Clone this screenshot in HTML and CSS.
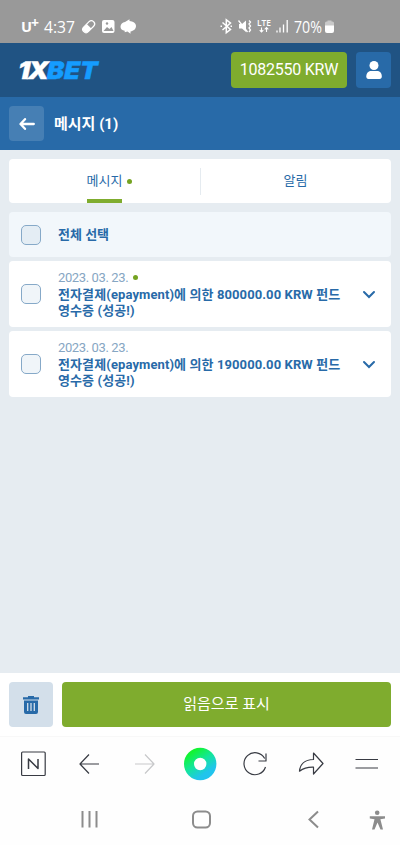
FILE: index.html
```html
<!DOCTYPE html>
<html lang="ko">
<head>
<meta charset="utf-8">
<meta name="viewport" content="width=device-width">
<title>메시지</title>
<link rel="stylesheet" href="styles.css">
</head>
<body>
<div class="status">
  <svg width="400" height="43" viewBox="0 0 400 43" fill="none" stroke="#fff">
    <g class="status-text">
      <text x="21" y="32" font-size="15" font-weight="700" textLength="11" lengthAdjust="spacingAndGlyphs">U</text>
      <text x="31" y="28" font-size="14" font-weight="700" textLength="8" lengthAdjust="spacingAndGlyphs">+</text>
      <text x="44" y="32.500" font-size="16" textLength="31" lengthAdjust="spacingAndGlyphs">4:37</text>
      <text x="257" y="26" font-size="8.500" font-weight="600" textLength="14" lengthAdjust="spacingAndGlyphs">LTE</text>
      <text x="294" y="32.500" font-size="16" textLength="28" lengthAdjust="spacingAndGlyphs">70%</text>
    </g>
    <g transform="rotate(-45 88.500 26.500)"><rect x="81.500" y="23.500" width="14" height="6.500" rx="3.200" stroke-width="1.200"/><path d="M89 23.500h-4a3.200 3.200 0 0 0 0 6.500h4z" fill="#fff" stroke="none"/></g>
    <rect x="102" y="20" width="12.500" height="13" rx="2" fill="#fff" stroke="none"/>
    <path d="M103.500 31l3.500-4 2.500 2 2-2 2 4z" fill="#999" stroke="none"/><circle cx="107" cy="23.500" r="1.200" fill="#999" stroke="none"/>
    <path d="M129.500 19.300v1.700c3.500.2 6.500 2.300 6.500 5 0 3-2.500 5-5.500 5.500v2.300l-3-2.300-2.800.8v-1.500c-2.600-.3-4.200-1.800-4.200-4 0-2.800 2-4.600 4.500-4.800z" fill="#fff" stroke="none"/>
    <path d="M222.500 22.500l8 7-4.200 3.200V19.800l4.200 3.200-8 7M220.500 26.200h1.500M230.500 26.200h1.500" stroke-width="1.500"/>
    <path d="M239 24h3l4-3.500V32l-4-3.500h-3z" fill="#fff" stroke="none"/><path d="M238.500 20.500l9 11.500M249 20.500l1.500 1.500-1.500 2 1.500 2-1.500 2 1.500 2-1.500 2" stroke-width="1.300"/>
    <path d="M261.500 27.500v4.500m-1.800-1.800l1.800 1.800 1.800-1.800M266.500 32v-4.500m-1.800 1.800l1.800-1.800 1.800 1.800" stroke-width="1.100"/>
    <path d="M277 32.500v-2M280 32.500v-5M283.500 32.500v-8M287.200 32.500V20" stroke-width="1.300"/>
    <path d="M325 23q0-1.500 1.500-1.500h1v-1h4v1h1q1.500 0 1.500 1.500v3h-9z" fill="#c9c9c9" stroke="none"/><path d="M325 25.500h9V31q0 2-2 2h-5q-2 0-2-2z" fill="#fff" stroke="none"/>
  </svg>
</div>
<header class="header">
  <svg class="logo" width="84" height="20" viewBox="0 0 84 20">
    <g transform="translate(3.500 0) skewX(-12)">
      <text class="logo-text" x="0" y="18.700" textLength="12" lengthAdjust="spacingAndGlyphs">1</text>
      <text class="logo-text" x="10" y="18.700" textLength="21" lengthAdjust="spacingAndGlyphs">X</text>
      <text class="logo-text bet" x="29" y="18.700" textLength="50.500" lengthAdjust="spacingAndGlyphs">BET</text>
    </g>
  </svg>
  <div class="balance">1082550 KRW</div>
  <div class="user"><svg width="16" height="18" viewBox="0 0 16 18" fill="#fff"><circle cx="8" cy="4.500" r="4.500"/><path d="M.3 15.500C.3 11.500 3 10 5 10h6c2.500 0 4.800 1.500 4.800 5.500 0 1.500-.8 2.500-2.300 2.500H2.500C1 18 .3 17 .3 15.500z"/></svg></div>
</header>
<div class="titlebar">
  <div class="back"><svg width="16" height="12" viewBox="0 0 16 12" fill="none" stroke="#fff" stroke-width="2.300" stroke-linecap="round" stroke-linejoin="round"><path d="M6 1.200L1.500 6 6 10.800M1.800 6H14.800"/></svg></div>
  <h1>메시지 (1)</h1>
</div>
<main>
  <div class="tabs">
    <div class="tab active"><span class="label">메시지</span><i class="dot"></i></div>
    <div class="tab"><span class="label">알림</span></div>
  </div>
  <div class="card all"><span class="check"></span><b>전체 선택</b></div>
  <div class="card">
    <span class="check"></span>
    <div class="message"><time>2023. 03. 23.<i class="dot"></i></time><b>전자결제(epayment)에 의한 800000.00 KRW 펀드<br>영수증 (성공!)</b></div>
    <svg class="chevron" width="14" height="9" viewBox="0 0 14 9"><path d="M2 2l5 5 5-5"/></svg>
  </div>
  <div class="card">
    <span class="check"></span>
    <div class="message"><time>2023. 03. 23.</time><b>전자결제(epayment)에 의한 190000.00 KRW 펀드<br>영수증 (성공!)</b></div>
    <svg class="chevron" width="14" height="9" viewBox="0 0 14 9"><path d="M2 2l5 5 5-5"/></svg>
  </div>
</main>
<div class="actions">
  <div class="trash"><svg width="16" height="18" viewBox="0 0 16 18"><path d="M5 0h6v1.200h5V3.500H0V1.200h5zM1 4.500h14V16q0 2-2 2H3q-2 0-2-2z" fill="#286aa8"/><path d="M4.700 7v8M8 7v8M11.300 7v8" stroke="#d3dfea" stroke-width="1.300"/></svg></div>
  <div class="mark">읽음으로 표시</div>
</div>
<nav class="browser">
  <svg width="400" height="53" viewBox="0 0 400 53" fill="none" stroke="#383b43" stroke-width="1.200" stroke-linejoin="round">
    <defs><linearGradient id="ring" gradientUnits="userSpaceOnUse" x1="190" y1="12" x2="210" y2="42"><stop offset=".1" stop-color="#13f431"/><stop offset=".45" stop-color="#13e69b"/><stop offset=".8" stop-color="#21c4ed"/></linearGradient></defs>
    <rect x="21.600" y="15" width="23.600" height="23.500" rx="1"/><path d="M28.500 32V22l9.500 9.500V22" stroke-width="1.500"/>
    <path d="M99 27H80M89 17.500L80 27l9 9.500"/>
    <path d="M135 27h19M145 17.500l9 9.500-9 9.500" stroke="#c7c8ca"/>
    <circle cx="200.200" cy="27" r="11.200" stroke="url(#ring)" stroke-width="10"/>
    <path d="M265.500 30a11 11 0 1 1-.8-8.500M266 16.500v7.500h-7.500"/>
    <path d="M313.500 16l9.500 10.500-9.500 10.500v-6.800c-6.500-.2-10 1-14 4 .5-6.500 5-11.500 14-11.700z"/>
    <path d="M355.500 22.500H378M355.500 31H378"/>
  </svg>
</nav>
<nav class="system">
  <svg width="400" height="55" viewBox="0 0 400 55" fill="none" stroke="#8c8c8c" stroke-width="2">
    <path d="M82.500 21v16.500M89.500 21v16.500M96.500 21v16.500"/>
    <rect x="193" y="21.500" width="17" height="16" rx="4.500"/>
    <path d="M318 21.500l-8.500 8 8.500 8"/>
    <circle cx="377.200" cy="22.800" r="2.300" fill="#8c8c8c" stroke="none"/>
    <path d="M369.800 26.200h15.200v2.200l-4.600.8 2.600 10.300h-2.500l-3-7-3 7H372l2.500-10.300-4.700-.8z" fill="#8c8c8c" stroke="none"/>
  </svg>
</nav>
</body>
</html>
```
FILE: styles.css
```css
* { box-sizing: border-box; }
body { margin: 0; width: 400px; height: 845px; overflow: hidden; display: flex; flex-direction: column; background: #e6ecf1; font-family: Roboto, "Noto Sans CJK KR", sans-serif; color: #286aa8; }
svg { display: block; flex: none; }
.status { height: 43px; background: #999; flex: none; }
.status-text { fill: #fff; stroke: none; font-family: "Open Sans", sans-serif; }
.header { height: 54px; flex: none; background: #205383; display: flex; align-items: center; padding: 0 9px 0 17px; }
.logo { overflow: visible; }
.logo-text { fill: #fff; stroke: #fff; stroke-width: .4px; font: 900 24px Inter, sans-serif; }
.logo-text.bet { fill: #159cff; stroke: #159cff; }
.balance { margin-left: auto; width: 116px; height: 36px; border-radius: 4px; background: #7fac2e; color: #fff; font-size: 16px; letter-spacing: -.25px; line-height: 36px; text-align: center; white-space: nowrap; }
.user { width: 35px; height: 36px; margin-left: 9px; border-radius: 4px; background: #286aa8; display: flex; align-items: center; justify-content: center; }
.titlebar { height: 53px; flex: none; background: #286aa8; display: flex; align-items: center; padding-left: 9px; color: #fff; }
.back { width: 35px; height: 35px; border-radius: 4px; background: #467fb4; display: flex; align-items: center; justify-content: center; }
h1 { margin: 0 0 0 10px; font-size: 15px; line-height: 22px; font-weight: 700; }
main { flex: none; height: 523px; padding: 9px 9px 0; display: flex; flex-direction: column; }
.tabs { height: 44px; border-radius: 4px; background: #fff; display: flex; margin-bottom: 9px; }
.tab { flex: 1; height: 44px; display: flex; justify-content: center; align-items: center; font-size: 13px; position: relative; }
.tab + .tab::before { content: ""; width: 1px; height: 27px; background: #e5ebf0; position: absolute; left: 0; top: 9px; }
.label { line-height: 44px; height: 44px; }
.tab.active .label { background: linear-gradient(#7fac2e, #7fac2e) bottom / 100% 4px no-repeat; }
.dot { display: inline-block; width: 5px; height: 5px; border-radius: 50%; background: #75a321; margin-left: 5px; }
.tab .dot { margin-right: -10px; }
.card { height: 66px; flex: none; border-radius: 4px; background: #fff; display: flex; align-items: center; padding: 0 15px 0 12px; margin-bottom: 4px; font-size: 13px; }
.card.all { height: 45px; background: #f2f7fb; }
.check { width: 20px; height: 20px; flex: none; border: 1px solid #86a9c8; border-radius: 5px; background: #f0f5f9; margin-right: 17px; }
.all .check { background: #e4edf4; }
.card b { display: block; line-height: 16px; white-space: nowrap; }
.message b { letter-spacing: .1px; }
time { display: flex; align-items: center; line-height: 17px; height: 17px; margin-bottom: 1px; color: #86a6c3; white-space: nowrap; letter-spacing: -.38px; }
.chevron { margin-left: auto; fill: none; stroke: #286aa8; stroke-width: 2; stroke-linecap: round; }
.actions { height: 64px; flex: none; padding: 9px 9px 0; background: #fff; display: flex; gap: 9px; border-bottom: 1px solid #f8f8f8; }
.trash { width: 44px; height: 45px; border-radius: 4px; background: #d3dfea; display: flex; align-items: center; justify-content: center; }
.mark { flex: 1; height: 45px; border-radius: 4px; background: #7fac2e; color: #fff; text-align: center; font-size: 15px; line-height: 45px; }
.browser { height: 53px; flex: none; background: #fefefe; }
.system { height: 55px; flex: none; background: #fefefe; }
```
